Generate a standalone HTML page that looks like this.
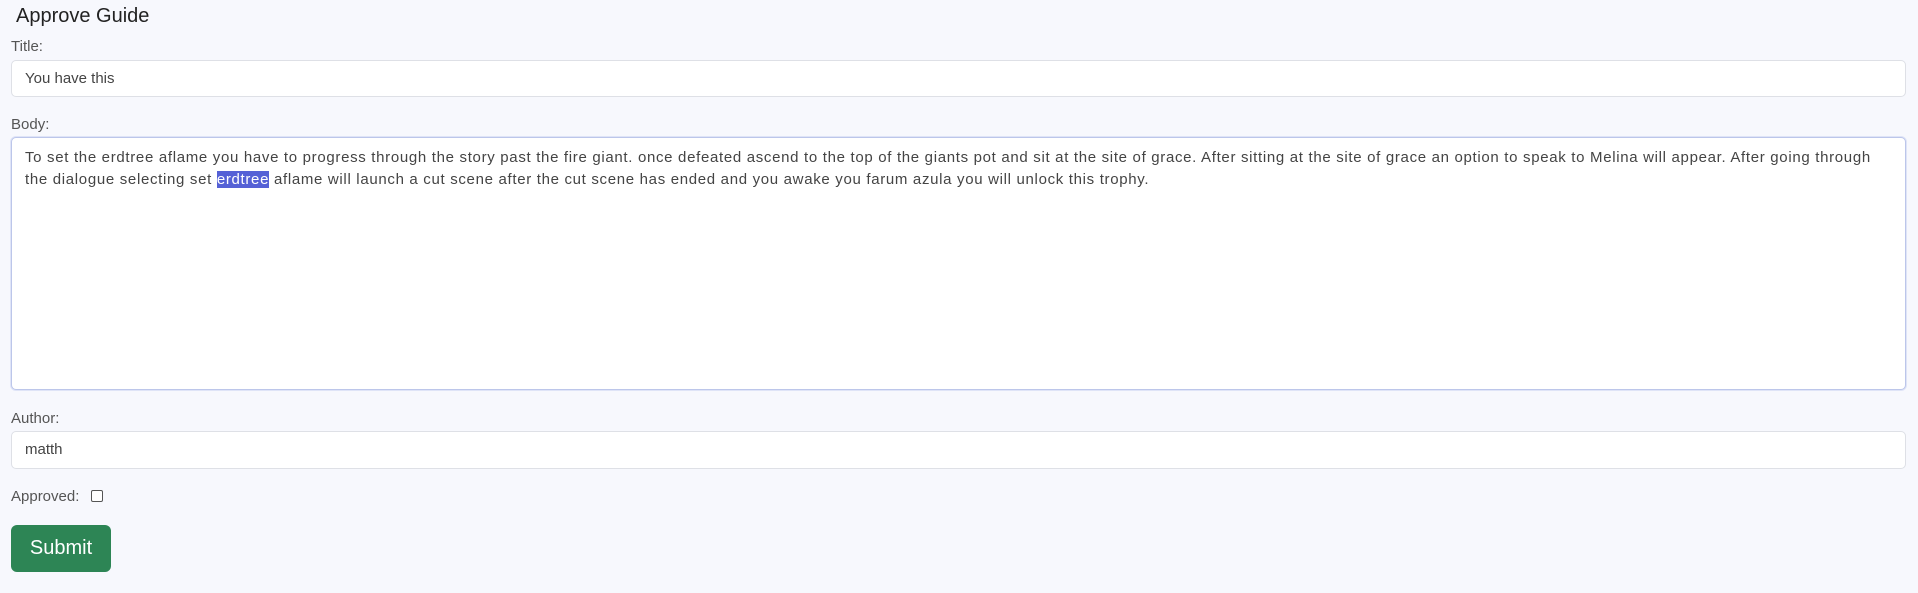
<!DOCTYPE html>
<html><head><meta charset="utf-8"><style>
*{box-sizing:border-box;margin:0;padding:0}
html,body{width:1918px;height:593px;background:#f7f8fd;overflow:hidden}
body{font-family:"Liberation Sans",sans-serif;color:#4a4a4a;position:relative}
.a{position:absolute}
h2{position:absolute;left:16px;top:5px;font-size:20px;font-weight:normal;color:#222}
.lbl{font-size:15px;color:#555}
.inp{left:11px;width:1895px;background:#fff;border:1px solid #dee0e6;border-radius:5px;font-size:15px;color:#444;padding-left:13px}
.ta{border-color:#bcc6ea;box-shadow:0 0 0 1px #dfe4f7}
.t{white-space:pre;font-size:15px;letter-spacing:0.68px;line-height:22px}
.hl{background:#5561d6;color:#fff}
.btn{left:11px;top:525px;width:100px;height:47px;background:#2d8555;border-radius:6px;color:#fff;font-size:20px;text-align:center;line-height:47px}
.cb{left:91px;top:490px;width:12px;height:12px;border:1px solid #555;border-radius:2px;background:#fff}
</style></head><body>
<h2>Approve Guide</h2>
<div class="a lbl" style="left:11px;top:38px">Title:</div>
<div class="a inp" style="top:60px;height:37px;line-height:35px">You have this</div>
<div class="a lbl" style="left:11px;top:116px">Body:</div>
<div class="a inp ta" style="top:137px;height:253px;padding-top:9px">
<div class="t">To set the erdtree aflame you have to progress through the story past the fire giant. once defeated ascend to the top of the giants pot and sit at the site of grace. After sitting at the site of grace an option to speak to Melina will appear. After going through
the dialogue selecting set <span class="hl">erdtree</span> aflame will launch a cut scene after the cut scene has ended and you awake you farum azula you will unlock this trophy.</div>
</div>
<div class="a lbl" style="left:11px;top:410px">Author:</div>
<div class="a inp" style="top:431px;height:38px;line-height:36px">matth</div>
<div class="a lbl" style="left:11px;top:488px">Approved:</div>
<div class="a cb"></div>
<div class="a btn">Submit</div>
</body></html>
